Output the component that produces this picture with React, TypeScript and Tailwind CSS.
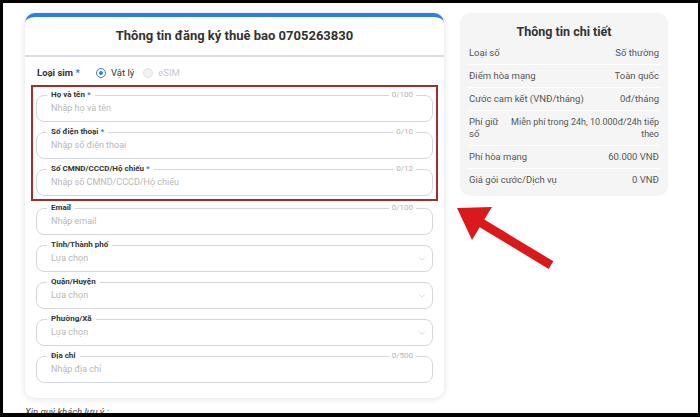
import { ChevronDown } from 'lucide-react';

type Field = {
  label: string;
  required?: boolean;
  placeholder: string;
  counter?: string;
  select?: boolean;
};

const idFields: Field[] = [
  { label: 'Họ và tên', required: true, placeholder: 'Nhập họ và tên', counter: '0/100' },
  { label: 'Số điện thoại', required: true, placeholder: 'Nhập số điện thoại', counter: '0/10' },
  { label: 'Số CMND/CCCD/Hộ chiếu', required: true, placeholder: 'Nhập số CMND/CCCD/Hộ chiếu', counter: '0/12' },
];

const otherFields: Field[] = [
  { label: 'Email', placeholder: 'Nhập email', counter: '0/100' },
  { label: 'Tỉnh/Thành phố', placeholder: 'Lựa chọn', select: true },
  { label: 'Quận/Huyện', placeholder: 'Lựa chọn', select: true },
  { label: 'Phường/Xã', placeholder: 'Lựa chọn', select: true },
  { label: 'Địa chỉ', placeholder: 'Nhập địa chỉ', counter: '0/500' },
];

const details = [
  { label: 'Loại số', value: 'Số thường' },
  { label: 'Điểm hòa mạng', value: 'Toàn quốc' },
  { label: 'Cước cam kết (VNĐ/tháng)', value: '0đ/tháng' },
  { label: 'Phí hòa mạng', value: '60.000 VNĐ' },
  { label: 'Giá gói cước/Dịch vụ', value: '0 VNĐ' },
];

function FormField({ field }: { field: Field }) {
  return (
    <fieldset className="rounded-[8px] border border-[#d3d7dc] px-[14px] pb-[3px]">
      <legend
        className={
          field.counter
            ? '-ml-[4px] flex w-[calc(100%+2px)] items-center text-[8px] leading-[10px]'
            : '-ml-[4px] flex items-center text-[8px] leading-[10px]'
        }
      >
        <span className="px-[4px] font-bold text-[#333]">
          {field.label}
          {field.required && <span className="text-[#2d7fe0]"> *</span>}
        </span>
        {field.counter && (
          <>
            <span className="h-px flex-1 bg-[#d3d7dc]" />
            <span className="px-[3px] text-[#b3b3b3]">{field.counter}</span>
          </>
        )}
      </legend>
      <div className="flex h-[18px] items-center">
        {field.select ? (
          <>
            <span className="flex-1 text-[9px] text-[#b8b8b8]">{field.placeholder}</span>
            <ChevronDown className="-mr-[9px] h-[10px] w-[10px] text-[#c4c4c4]" strokeWidth={1.5} />
          </>
        ) : (
          <input
            className="w-full bg-transparent text-[9px] text-[#333] outline-none placeholder:text-[#b8b8b8]"
            placeholder={field.placeholder}
          />
        )}
      </div>
    </fieldset>
  );
}

function DetailRow({
  label,
  value,
  last,
  small,
}: {
  label: React.ReactNode;
  value: React.ReactNode;
  last?: boolean;
  small?: boolean;
}) {
  return (
    <div
      className={
        'flex items-center justify-between gap-[4px] py-[5px] leading-[12px] text-[#555] ' +
        (last ? '' : 'border-b border-white')
      }
    >
      <span className="shrink-0 whitespace-nowrap text-[9.5px]">{label}</span>
      <span className={small ? 'whitespace-nowrap text-right text-[9px]' : 'whitespace-nowrap text-right text-[9.5px]'}>
        {value}
      </span>
    </div>
  );
}

export default function App() {
  return (
    <div
      className="relative h-[417px] w-[700px] overflow-hidden border-b-[4px] border-l-[3px] border-r-[2px] border-t-[3px] border-black bg-white"
      style={{ fontFamily: 'Roboto, "Noto Sans", sans-serif' }}
    >
      <div className="flex gap-[16px] pl-[22px] pt-[10px]">
        <div className="flex w-[419px] flex-col">
          <div className="rounded-[10px] border-t-4 border-[#2d7fe0] bg-white pb-[15px] shadow-[0_1px_6px_rgba(0,0,0,0.12)]">
            <div className="flex h-[40px] items-center justify-center border-b-2 border-[#d8dee6]">
              <h1 className="text-[13px] font-bold text-[#333]">Thông tin đăng ký thuê bao 0705263830</h1>
            </div>

            <div className="flex flex-col gap-[5px] px-[11px] pt-[10px]">
              <div className="mb-[1px] ml-[1px] flex h-[12px] items-center text-[9.5px]">
                <span className="w-[59px] font-bold text-[#333]">
                  Loại sim <span className="text-[#2d7fe0]">*</span>
                </span>
                <span className="flex h-[10px] w-[10px] items-center justify-center rounded-full border-[1.5px] border-[#2d7fe0]">
                  <span className="h-[4px] w-[4px] rounded-full bg-[#2d7fe0]" />
                </span>
                <span className="ml-[5px] text-[#333]">Vật lý</span>
                <span className="ml-[9px] h-[10px] w-[10px] rounded-full border border-[#e2e2e2] bg-[#f2f2f2]" />
                <span className="ml-[5px] text-[#cacaca]">eSIM</span>
              </div>

              <div className="-mx-[5px] -mb-[3px] flex flex-col gap-[5px] border-2 border-[#a62b2b] px-[3px] py-[3px]">
                {idFields.map((f) => (
                  <FormField key={f.label} field={f} />
                ))}
              </div>

              {otherFields.map((f) => (
                <FormField key={f.label} field={f} />
              ))}
            </div>
          </div>
          <p className="mt-[7px] text-[9.5px] italic text-[#444] underline">Xin quý khách lưu ý :</p>
        </div>

        <div className="flex w-[208px] flex-col self-start rounded-[10px] bg-[#f5f5f6] px-[9px] pb-[5px] pt-[11px]">
          <h2 className="mb-[2px] text-center text-[12.5px] font-bold leading-[16px] text-[#333]">Thông tin chi tiết</h2>
          <DetailRow label={details[0].label} value={details[0].value} />
          <DetailRow label={details[1].label} value={details[1].value} />
          <DetailRow label={details[2].label} value={details[2].value} />
          <DetailRow
            small
            label={
              <>
                Phí giữ
                <br />
                số
              </>
            }
            value={
              <>
                Miễn phí trong 24h, 10.000đ/24h tiếp
                <br />
                theo
              </>
            }
          />
          <DetailRow label={details[3].label} value={details[3].value} />
          <DetailRow label={details[4].label} value={details[4].value} last />
        </div>
      </div>

      <svg
        className="pointer-events-none absolute -left-[3px] -top-[3px] h-[417px] w-[700px]"
        viewBox="0 0 700 417"
      >
        <polygon
          points="457,208 492,207 484.3,219.6 553.3,261.2 548.7,268.9 479.7,227.3 472,240"
          fill="#da1a1a"
        />
      </svg>
    </div>
  );
}
